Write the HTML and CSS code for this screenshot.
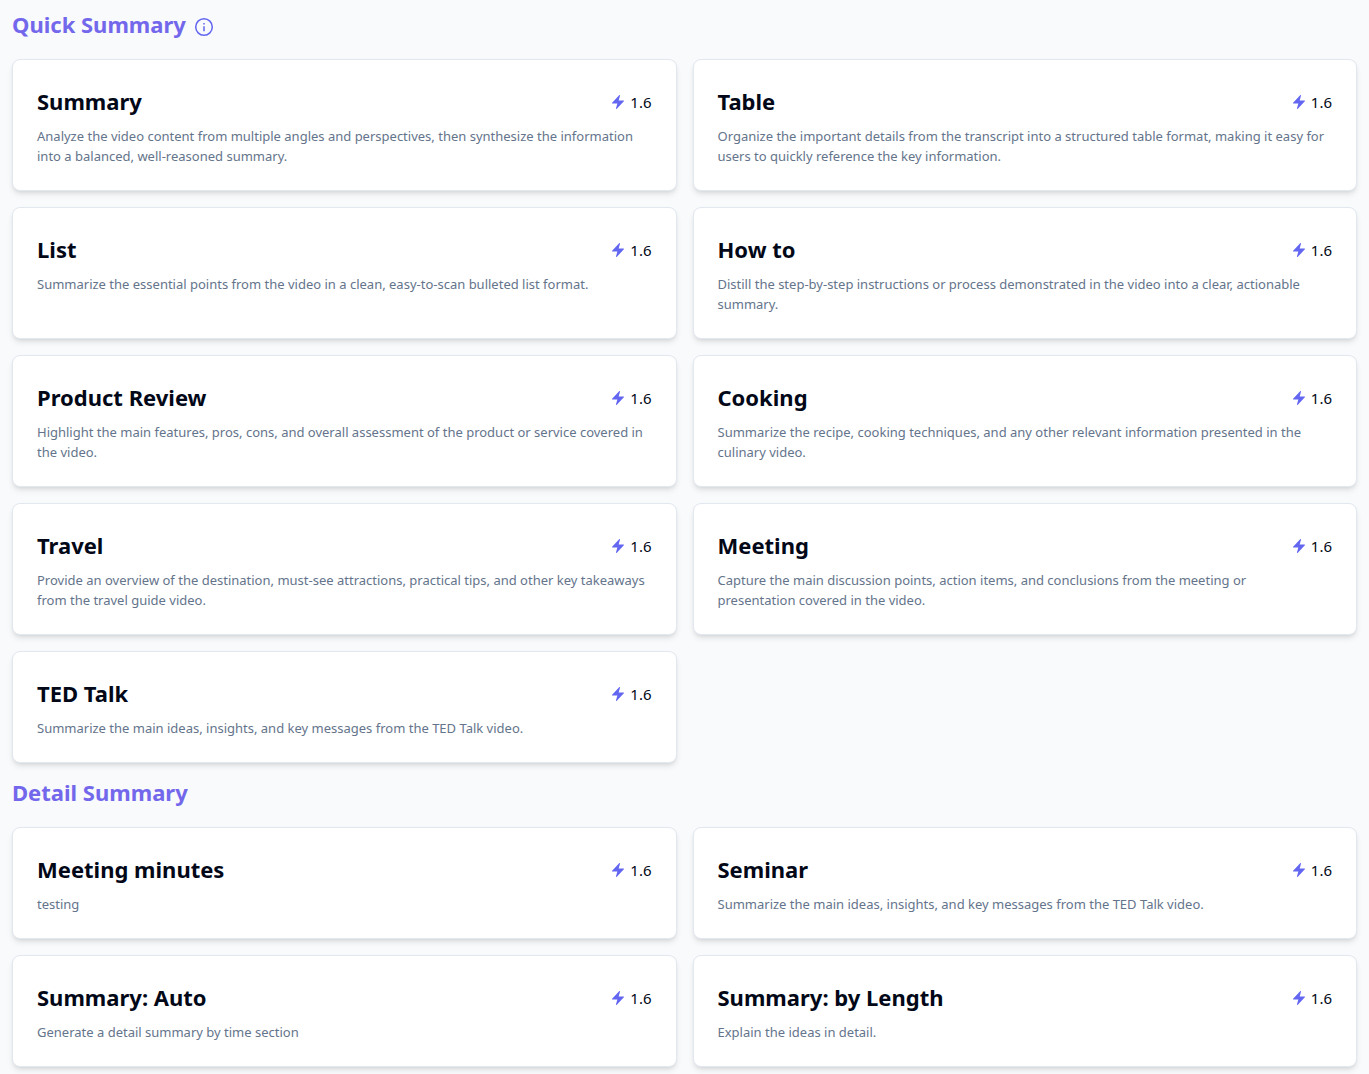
FILE: index.html
```html
<!DOCTYPE html>
<html lang="en">
<head>
<meta charset="utf-8">
<meta name="viewport" content="width=device-width, initial-scale=1">
<title>Summary templates</title>
<link rel="stylesheet" href="styles.css">
</head>
<body>
<svg class="sprite" aria-hidden="true">
  <symbol id="bolt" viewBox="0 0 24 24"><path d="M14.6 1.6a.75.75 0 0 1 .36.85L12.98 9.75h7.27a.75.75 0 0 1 .55 1.26l-10.5 11.25a.75.75 0 0 1-1.27-.71l1.99-7.3H3.75a.75.75 0 0 1-.55-1.26L13.7 1.74a.75.75 0 0 1 .9-.14z"/></symbol>
</svg>
<main class="page">
  <section class="group">
    <div class="group-head">
      <h2 class="group-title">Quick Summary</h2>
      <button class="info" type="button" aria-label="About quick summary">
        <svg viewBox="0 0 20 20" width="20" height="20" fill="none" stroke="currentColor" stroke-width="1.5"><circle cx="10" cy="10" r="8.3"/><path d="M10 9.2v5M10 6v1.6"/></svg>
      </button>
    </div>
    <div class="cards">
      <article class="card"><header class="card-head"><h3 class="card-title">Summary</h3><span class="cost"><svg class="bolt"><use href="#bolt"/></svg>1.6</span></header><p class="card-text">Analyze the video content from multiple angles and perspectives, then synthesize the information into a balanced, well-reasoned summary.</p></article>
      <article class="card"><header class="card-head"><h3 class="card-title">Table</h3><span class="cost"><svg class="bolt"><use href="#bolt"/></svg>1.6</span></header><p class="card-text">Organize the important details from the transcript into a structured table format, making it easy for users to quickly reference the key information.</p></article>
      <article class="card"><header class="card-head"><h3 class="card-title">List</h3><span class="cost"><svg class="bolt"><use href="#bolt"/></svg>1.6</span></header><p class="card-text">Summarize the essential points from the video in a clean, easy-to-scan bulleted list format.</p></article>
      <article class="card"><header class="card-head"><h3 class="card-title">How to</h3><span class="cost"><svg class="bolt"><use href="#bolt"/></svg>1.6</span></header><p class="card-text">Distill the step-by-step instructions or process demonstrated in the video into a clear, actionable summary.</p></article>
      <article class="card"><header class="card-head"><h3 class="card-title">Product Review</h3><span class="cost"><svg class="bolt"><use href="#bolt"/></svg>1.6</span></header><p class="card-text">Highlight the main features, pros, cons, and overall assessment of the product or service covered in the video.</p></article>
      <article class="card"><header class="card-head"><h3 class="card-title">Cooking</h3><span class="cost"><svg class="bolt"><use href="#bolt"/></svg>1.6</span></header><p class="card-text">Summarize the recipe, cooking techniques, and any other relevant information presented in the culinary video.</p></article>
      <article class="card"><header class="card-head"><h3 class="card-title">Travel</h3><span class="cost"><svg class="bolt"><use href="#bolt"/></svg>1.6</span></header><p class="card-text">Provide an overview of the destination, must-see attractions, practical tips, and other key takeaways from the travel guide video.</p></article>
      <article class="card"><header class="card-head"><h3 class="card-title">Meeting</h3><span class="cost"><svg class="bolt"><use href="#bolt"/></svg>1.6</span></header><p class="card-text">Capture the main discussion points, action items, and conclusions from the meeting or presentation covered in the video.</p></article>
      <article class="card"><header class="card-head"><h3 class="card-title">TED Talk</h3><span class="cost"><svg class="bolt"><use href="#bolt"/></svg>1.6</span></header><p class="card-text">Summarize the main ideas, insights, and key messages from the TED Talk video.</p></article>
    </div>
  </section>
  <section class="group">
    <div class="group-head">
      <h2 class="group-title">Detail Summary</h2>
    </div>
    <div class="cards">
      <article class="card"><header class="card-head"><h3 class="card-title">Meeting minutes</h3><span class="cost"><svg class="bolt"><use href="#bolt"/></svg>1.6</span></header><p class="card-text">testing</p></article>
      <article class="card"><header class="card-head"><h3 class="card-title">Seminar</h3><span class="cost"><svg class="bolt"><use href="#bolt"/></svg>1.6</span></header><p class="card-text">Summarize the main ideas, insights, and key messages from the TED Talk video.</p></article>
      <article class="card"><header class="card-head"><h3 class="card-title">Summary: Auto</h3><span class="cost"><svg class="bolt"><use href="#bolt"/></svg>1.6</span></header><p class="card-text">Generate a detail summary by time section</p></article>
      <article class="card"><header class="card-head"><h3 class="card-title">Summary: by Length</h3><span class="cost"><svg class="bolt"><use href="#bolt"/></svg>1.6</span></header><p class="card-text">Explain the ideas in detail.</p></article>
    </div>
  </section>
</main>
</body>
</html>
```
FILE: styles.css
```css
* { box-sizing: border-box; }

body {
  margin: 0;
  background: #f8fafc;
  color: #020817;
  font-family: "Segoe UI", "Noto Sans", sans-serif;
  font-size: 15px;
  line-height: 24px;
}

h2, h3, p { margin: 0; }

.sprite { position: absolute; width: 0; height: 0; }

.page {
  display: flex;
  flex-direction: column;
  gap: 12px;
  padding: 7px 12px;
}

.group {
  display: flex;
  flex-direction: column;
  gap: 16px;
}

.group-head {
  display: flex;
  align-items: center;
  gap: 8px;
}

.group-title,
.card-title {
  padding-bottom: 2px;
  font-size: 22px;
  font-weight: 700;
  line-height: 34px;
}

.group-title { color: #7367eb; }

.info {
  display: flex;
  padding: 4px 0 0;
  border: 0;
  background: none;
  color: #6366f1;
}

.cards {
  display: grid;
  grid-template-columns: repeat(2, minmax(0, 1fr));
  gap: 16px;
}

.card {
  display: flex;
  flex-direction: column;
  gap: 6px;
  padding: 24px;
  border: 1px solid #e2e8f0;
  border-radius: 8px;
  background: #fff;
  box-shadow: 0 4px 6px -1px rgb(0 0 0 / 0.1), 0 2px 4px -2px rgb(0 0 0 / 0.1);
}

.card-head {
  display: flex;
  align-items: center;
  justify-content: space-between;
}

.cost {
  display: flex;
  align-items: center;
  gap: 4px;
}

.bolt {
  width: 16px;
  height: 16px;
  fill: #6366f1;
}

.card-text {
  padding-right: 5px;
  color: #64748b;
  font-size: 13px;
  line-height: 20px;
}
```
